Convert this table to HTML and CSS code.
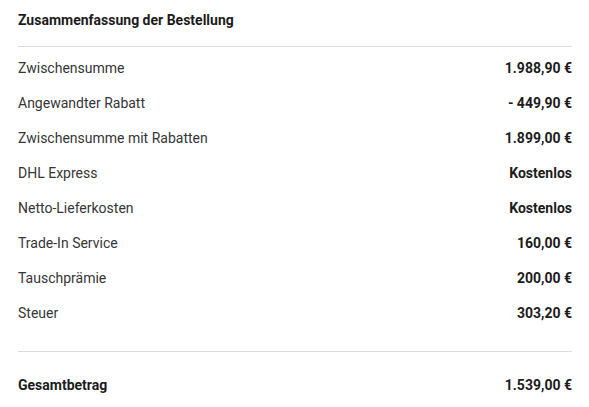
FILE: index.html
```html
<!DOCTYPE html>
<html lang="de">
<head>
<meta charset="utf-8">
<link rel="stylesheet" href="styles.css">
</head>
<body>
<section class="summary">
  <h2 class="summary-title">Zusammenfassung der Bestellung</h2>
  <div class="rows">
    <div class="row"><span class="label">Zwischensumme</span><span class="value">1.988,90 €</span></div>
    <div class="row"><span class="label">Angewandter Rabatt</span><span class="value">- 449,90 €</span></div>
    <div class="row"><span class="label">Zwischensumme mit Rabatten</span><span class="value">1.899,00 €</span></div>
    <div class="row"><span class="label">DHL Express</span><span class="value">Kostenlos</span></div>
    <div class="row"><span class="label">Netto-Lieferkosten</span><span class="value">Kostenlos</span></div>
    <div class="row"><span class="label">Trade-In Service</span><span class="value">160,00 €</span></div>
    <div class="row"><span class="label">Tauschprämie</span><span class="value">200,00 €</span></div>
    <div class="row"><span class="label">Steuer</span><span class="value">303,20 €</span></div>
  </div>
  <div class="row total"><span class="label">Gesamtbetrag</span><span class="value">1.539,00 €</span></div>
</section>
</body>
</html>
```
FILE: styles.css
```css
html, body {
  margin: 0;
  background: #fff;
}
body {
  font-family: Roboto, "Liberation Sans", sans-serif;
  color: #363636;
}
.summary {
  width: 554px;
  padding: 0 17px 0 18px;
}
.summary-title {
  margin: 0;
  font-size: 14px;
  font-weight: 700;
  color: #1c1c1c;
  line-height: 18px;
  padding: 11px 0 17px;
  border-bottom: 1px solid #dcdcdc;
}
.rows {
  padding: 3px 0 21px;
  border-bottom: 1px solid #dcdcdc;
}
.row {
  display: flex;
  justify-content: space-between;
  align-items: center;
  height: 35px;
  font-size: 14px;
}
.value {
  font-weight: 700;
  color: #1c1c1c;
}
.total {
  margin-top: 15px;
}
.total .label {
  font-weight: 700;
  color: #1c1c1c;
}
```
